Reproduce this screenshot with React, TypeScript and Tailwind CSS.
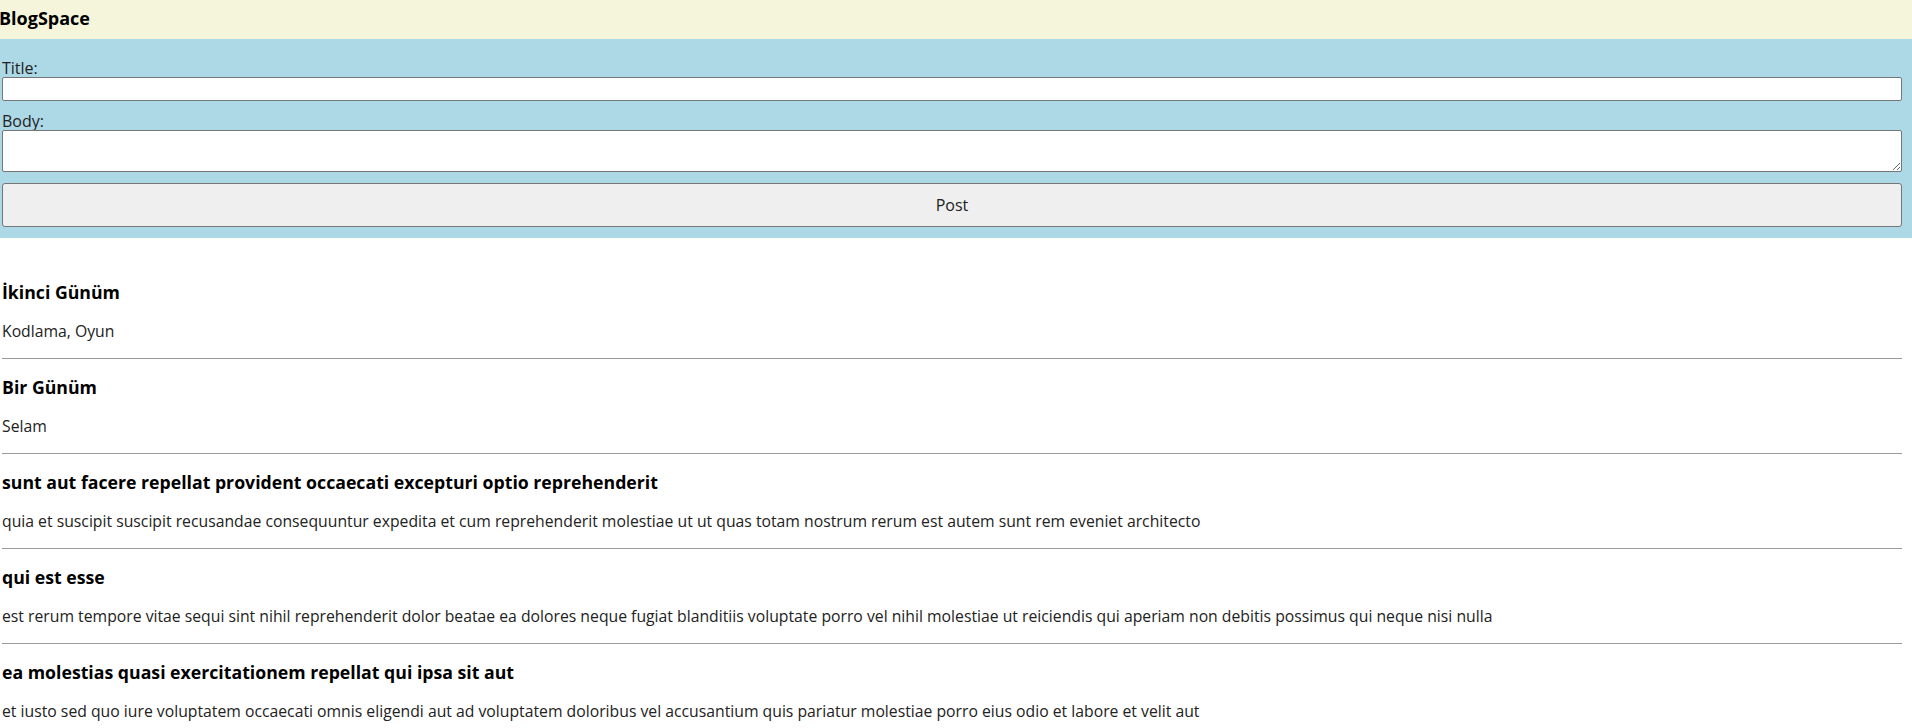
import { useState } from "react";

const posts = [
  { title: "İkinci Günüm", body: "Kodlama, Oyun" },
  { title: "Bir Günüm", body: "Selam" },
  {
    title: "sunt aut facere repellat provident occaecati excepturi optio reprehenderit",
    body: "quia et suscipit suscipit recusandae consequuntur expedita et cum reprehenderit molestiae ut ut quas totam nostrum rerum est autem sunt rem eveniet architecto",
  },
  {
    title: "qui est esse",
    body: "est rerum tempore vitae sequi sint nihil reprehenderit dolor beatae ea dolores neque fugiat blanditiis voluptate porro vel nihil molestiae ut reiciendis qui aperiam non debitis possimus qui neque nisi nulla",
  },
  {
    title: "ea molestias quasi exercitationem repellat qui ipsa sit aut",
    body: "et iusto sed quo iure voluptatem occaecati omnis eligendi aut ad voluptatem doloribus vel accusantium quis pariatur molestiae porro eius odio et labore et velit aut",
  },
];

export default function App() {
  const [title, setTitle] = useState("");
  const [body, setBody] = useState("");

  return (
    <div className="min-h-screen bg-white text-[#222] font-['Open_Sans',sans-serif]">
      {/* Header */}
      <header className="h-[39px] bg-[#f5f5dc] pt-[7px]">
        <h1 className="-ml-[1px] text-[18px] leading-[22px] font-bold text-black">BlogSpace</h1>
      </header>

      {/* Form */}
      <form
        className="bg-[#add8e6] pt-[20px] pb-[11px] pl-[2px] pr-[10px] flex flex-col"
        onSubmit={(e) => e.preventDefault()}
      >
        <label htmlFor="title" className="text-[16px] leading-[18px] text-[#222]">Title:</label>
        <input
          id="title"
          value={title}
          onChange={(e) => setTitle(e.target.value)}
          className="h-[24px] bg-white border border-[#767676] rounded-[2px] px-1"
        />
        <label htmlFor="body" className="mt-[11px] text-[16px] leading-[18px] text-[#222]">Body:</label>
        <textarea
          id="body"
          value={body}
          onChange={(e) => setBody(e.target.value)}
          className="h-[42px] bg-white border border-[#767676] rounded-[2px] px-1"
        />
        <button className="mt-[11px] h-[44px] bg-[#efefef] border border-[#767676] rounded-[3px] text-[16px] text-[#222]">
          Post
        </button>
      </form>

      {/* Posts */}
      <div className="pt-[26px] pl-[2px] pr-[10px]">
        {posts.map((p) => (
          <div key={p.title} className="pt-[17px] pb-[17px] border-b border-[#9a9a9a]">
            <h3 className="text-[17.7px] leading-[22px] font-bold text-black">{p.title}</h3>
            <p className="mt-[18px] text-[15.75px] leading-[20px]">{p.body}</p>
          </div>
        ))}
      </div>
    </div>
  );
}
